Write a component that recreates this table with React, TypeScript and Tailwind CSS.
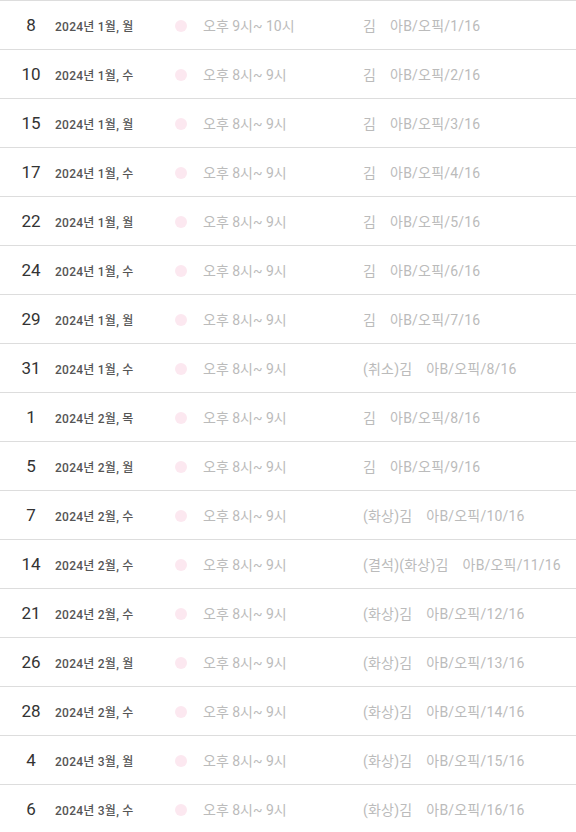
import React from "react";

const rows: [string, string, string, string][] = [
  ["8", "2024년 1월, 월", "오후 9시~ 10시", "김|아B/오픽/1/16"],
  ["10", "2024년 1월, 수", "오후 8시~ 9시", "김|아B/오픽/2/16"],
  ["15", "2024년 1월, 월", "오후 8시~ 9시", "김|아B/오픽/3/16"],
  ["17", "2024년 1월, 수", "오후 8시~ 9시", "김|아B/오픽/4/16"],
  ["22", "2024년 1월, 월", "오후 8시~ 9시", "김|아B/오픽/5/16"],
  ["24", "2024년 1월, 수", "오후 8시~ 9시", "김|아B/오픽/6/16"],
  ["29", "2024년 1월, 월", "오후 8시~ 9시", "김|아B/오픽/7/16"],
  ["31", "2024년 1월, 수", "오후 8시~ 9시", "(취소)김|아B/오픽/8/16"],
  ["1", "2024년 2월, 목", "오후 8시~ 9시", "김|아B/오픽/8/16"],
  ["5", "2024년 2월, 월", "오후 8시~ 9시", "김|아B/오픽/9/16"],
  ["7", "2024년 2월, 수", "오후 8시~ 9시", "(화상)김|아B/오픽/10/16"],
  ["14", "2024년 2월, 수", "오후 8시~ 9시", "(결석)(화상)김|아B/오픽/11/16"],
  ["21", "2024년 2월, 수", "오후 8시~ 9시", "(화상)김|아B/오픽/12/16"],
  ["26", "2024년 2월, 월", "오후 8시~ 9시", "(화상)김|아B/오픽/13/16"],
  ["28", "2024년 2월, 수", "오후 8시~ 9시", "(화상)김|아B/오픽/14/16"],
  ["4", "2024년 3월, 월", "오후 8시~ 9시", "(화상)김|아B/오픽/15/16"],
  ["6", "2024년 3월, 수", "오후 8시~ 9시", "(화상)김|아B/오픽/16/16"],
];

export default function App() {
  return (
    <div
      className="w-[576px] bg-white border-t border-[#dddddd]"
      style={{ fontFamily: 'Roboto, "Noto Sans CJK KR", sans-serif' }}
    >
      {rows.map(([d, date, time, name], i) => {
        const [a, b] = name.split("|");
        return (
          <div key={i} className="flex items-center h-[49px] border-b border-[#dddddd] pl-[7px] pt-[1px]">
            <div className="w-[48px] text-center text-[17px] text-[#333333] leading-none">{d}</div>
            <div className="w-[120px] mt-[3px] text-[12px] font-medium tracking-[0.25px] text-[#555555] leading-none">{date}</div>
            <div className="w-[12px] h-[12px] rounded-full bg-[#fce8f0]" />
            <div className="ml-[16px] w-[160px] text-[14px] text-[#bbbbbb] leading-none">{time}</div>
            <div className="text-[14px] text-[#bbbbbb] leading-none whitespace-nowrap tracking-[0.2px]">
              <span>{a}</span>
              <span className="ml-[14px]">{b}</span>
            </div>
          </div>
        );
      })}
    </div>
  );
}
